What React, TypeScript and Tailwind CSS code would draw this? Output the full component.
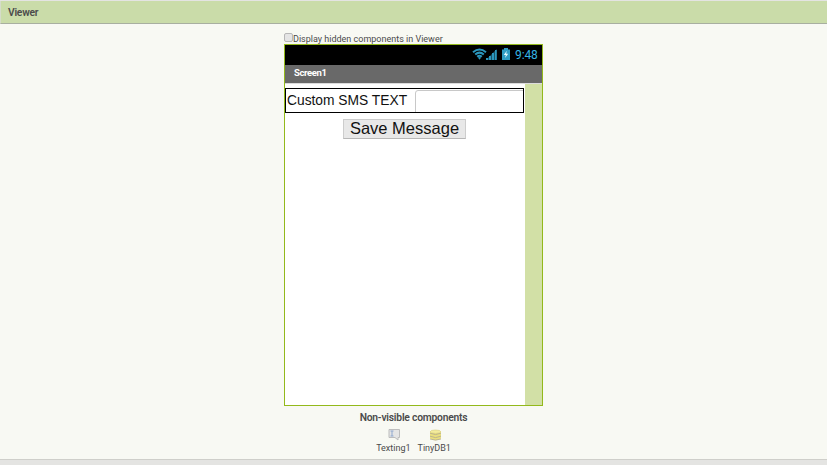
function StatusBar() {
  return (
    <div className="flex h-5 items-center justify-end bg-black pr-1 text-[#35b5e3]">
      <svg className="-mt-0.5" width="15" height="12" viewBox="0 0 15 12" fill="none" stroke="#2b96bc" strokeWidth="2">
        <path d="M1 4.2Q7.5-1.1 14 4.2" />
        <path d="M3.2 6.5Q7.5 2.7 11.8 6.5" />
        <path d="M5.2 8.7Q7.5 6.7 9.8 8.7" />
        <path d="M5.8 9.6L7.5 11.8 9.2 9.6Q7.5 8.2 5.8 9.6Z" fill="#2b96bc" stroke="none" />
      </svg>
      <svg className="-ml-px" width="11" height="12" viewBox="0 0 11 12" fill="#2b96bc">
        <path d="M0 11L10.7 0v11z" opacity=".55" />
        <path d="M0 9h2v2H0zM3 7h2v4H3zM6 4h2v7H6zM9 1h1.7v10H9z" />
      </svg>
      <svg className="-mt-0.5 ml-[5px]" width="8" height="12" viewBox="0 0 8 12">
        <path d="M2 0h4v1.5h2V12H0V1.5h2z" fill="#2f9dc4" />
        <path d="M4.8 2.8L1.8 7h2l-.7 3L6.2 5.7h-2z" fill="#e4fbff" />
      </svg>
      <span className="ml-[5px] w-[23px] whitespace-nowrap text-[12px] leading-5 tracking-[-0.1px]">9:48</span>
    </div>
  );
}

function Phone() {
  return (
    <div className="h-[362px] w-[259px] border border-[#93b91b] bg-white">
      <StatusBar />
      <div className="h-[18px] bg-[#696969] pl-[9px] text-[9.5px] font-bold leading-[16px] tracking-[-0.4px] text-white">Screen1</div>
      <div className="flex h-[322px] border-t border-[#dcdcdc]">
        <div className="flex w-60 flex-col pt-1 font-['Liberation_Sans',sans-serif] text-[#111]">
          <div className="flex h-[25px] w-[239px] overflow-hidden border border-black pl-px">
            <span className="w-32 shrink-0 whitespace-nowrap text-[13.8px] leading-[24px]">Custom SMS TEXT</span>
            <div className="mt-px h-7 w-[130px] shrink-0 rounded-[3px] border border-[#c8c8c8] bg-white" />
          </div>
          <button className="ml-[58px] mt-[6px] h-5 w-[123px] whitespace-nowrap border border-[#cdcdcd] border-b-[#b7b7b7] bg-[#e8e8e8] pb-0.5 text-[16.5px] leading-[16px]">
            Save Message
          </button>
        </div>
        <div className="flex-1 bg-[#d2e0a6]" />
      </div>
    </div>
  );
}

export default function App() {
  return (
    <div className="flex h-[465px] w-[827px] flex-col overflow-hidden bg-[#e4e4e2] font-['Roboto',sans-serif] text-[#4b4b4b]">
      <header className="mt-px h-[23px] border-b border-l border-b-[#a8afa0] border-l-[#d5dcc9] bg-[#cadca9] pl-[7px] text-[10.3px] font-semibold leading-[23px] tracking-[-0.25px]">
        Viewer
      </header>
      <main className="flex h-[436px] flex-col items-center border-b border-[#cfcfca] bg-[#f8f9f3]">
        <div className="flex h-5 w-[259px] items-start pt-[9px]">
          <span className="h-[9px] w-[9px] rounded-[2px] border border-[#b7b7b7] bg-[#e5e5e5]" />
          <span className="whitespace-nowrap text-[9px] leading-3">Display hidden components in Viewer</span>
        </div>
        <Phone />
        <h2 className="mt-[6px] text-[10.3px] font-semibold leading-3 tracking-[-0.22px]">Non-visible components</h2>
        <div className="mt-[5px] flex gap-[7px] text-[9px] leading-[10px]">
          <div className="flex flex-col items-center">
            <svg className="mb-[2px] ml-0.5" width="13" height="12" viewBox="0 0 13 12">
              <path d="M1 .5h10.5v8H10v2.5L7 8.5H1z" fill="#e5e5e5" stroke="#bdbdbd" />
              <path d="M2.5 2h3M4 2v5M2.5 7h3" stroke="#91a9cf" />
            </svg>
            Texting1
          </div>
          <div className="flex flex-col items-center">
            <svg className="mb-[2px] ml-0.5" width="13" height="12" viewBox="0 0 13 12">
              <path d="M1 2.5v7Q6.5 13 12 9.5v-7z" fill="#eadf7e" />
              <ellipse cx="6.5" cy="2.7" rx="5.2" ry="1.7" fill="#f4ec9c" stroke="#d4ca78" strokeWidth=".6" />
              <path d="M1 4.2Q6.5 7 12 4.2M1 7.2Q6.5 10 12 7.2M1 10Q6.5 12.2 12 10" fill="none" stroke="#b8b08e" strokeWidth=".9" />
            </svg>
            TinyDB1
          </div>
        </div>
      </main>
    </div>
  );
}
